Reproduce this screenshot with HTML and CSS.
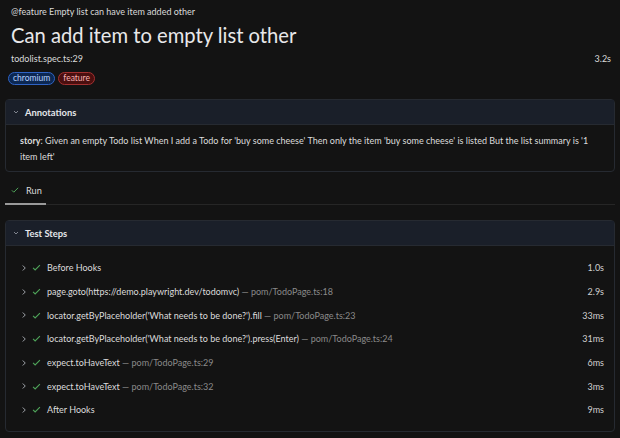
FILE: index.html
```html
<!DOCTYPE html>
<html>
<head>
<meta charset="utf-8">
<link rel="stylesheet" href="styles.css">
</head>
<body>
<div class="page">
  <div class="head">
    <div class="path">@feature Empty list can have item added other</div>
    <h1 class="title">Can add item to empty list other</h1>
    <div class="meta"><span>todolist.spec.ts:29</span><span>3.2s</span></div>
    <div class="badges"><span class="badge blue">chromium</span><span class="badge red">feature</span></div>
  </div>

  <section class="box annotations">
    <div class="box-head"><svg class="chev" viewBox="0 0 16 16"><path d="M4 6l4 4 4-4" /></svg>Annotations</div>
    <div class="ann-body"><b>story</b>: Given an empty Todo list When I add a Todo for 'buy some cheese' Then only the item 'buy some cheese' is listed But the list summary is '1 item left'</div>
  </section>

  <div class="tabs"><div class="tab"><svg class="check" viewBox="0 0 16 16"><path d="M3 8.5l3 3 7-7" /></svg>Run</div></div>

  <section class="box steps">
    <div class="box-head"><svg class="chev" viewBox="0 0 16 16"><path d="M4 6l4 4 4-4" /></svg>Test Steps</div>
    <div class="step-list">
      <div class="step"><svg class="rchev" viewBox="0 0 16 16"><path d="M6 4l4 4-4 4" /></svg><svg class="check" viewBox="0 0 16 16"><path d="M3 8.5l3 3 7-7" /></svg><span class="st">Before Hooks</span><span class="dur">1.0s</span></div>
      <div class="step"><svg class="rchev" viewBox="0 0 16 16"><path d="M6 4l4 4-4 4" /></svg><svg class="check" viewBox="0 0 16 16"><path d="M3 8.5l3 3 7-7" /></svg><span class="st">page.goto(https://demo.playwright.dev/todomvc) <span class="loc">— pom/TodoPage.ts:18</span></span><span class="dur">2.9s</span></div>
      <div class="step"><svg class="rchev" viewBox="0 0 16 16"><path d="M6 4l4 4-4 4" /></svg><svg class="check" viewBox="0 0 16 16"><path d="M3 8.5l3 3 7-7" /></svg><span class="st">locator.getByPlaceholder('What needs to be done?').fill <span class="loc">— pom/TodoPage.ts:23</span></span><span class="dur">33ms</span></div>
      <div class="step"><svg class="rchev" viewBox="0 0 16 16"><path d="M6 4l4 4-4 4" /></svg><svg class="check" viewBox="0 0 16 16"><path d="M3 8.5l3 3 7-7" /></svg><span class="st">locator.getByPlaceholder('What needs to be done?').press(Enter) <span class="loc">— pom/TodoPage.ts:24</span></span><span class="dur">31ms</span></div>
      <div class="step"><svg class="rchev" viewBox="0 0 16 16"><path d="M6 4l4 4-4 4" /></svg><svg class="check" viewBox="0 0 16 16"><path d="M3 8.5l3 3 7-7" /></svg><span class="st">expect.toHaveText <span class="loc">— pom/TodoPage.ts:29</span></span><span class="dur">6ms</span></div>
      <div class="step"><svg class="rchev" viewBox="0 0 16 16"><path d="M6 4l4 4-4 4" /></svg><svg class="check" viewBox="0 0 16 16"><path d="M3 8.5l3 3 7-7" /></svg><span class="st">expect.toHaveText <span class="loc">— pom/TodoPage.ts:32</span></span><span class="dur">3ms</span></div>
      <div class="step"><svg class="rchev" viewBox="0 0 16 16"><path d="M6 4l4 4-4 4" /></svg><svg class="check" viewBox="0 0 16 16"><path d="M3 8.5l3 3 7-7" /></svg><span class="st">After Hooks</span><span class="dur">9ms</span></div>
    </div>
  </section>
</div>
</body>
</html>
```
FILE: styles.css
```css
html, body {
  margin: 0;
  padding: 0;
  background: #131313;
  color: #e2e4e8;
  font-family: "Lato", "Open Sans", sans-serif;
}
.page {
  padding: 3px 5px 0 5px;
}
.head {
  padding: 0 4px 0 6px;
}
.path {
  font-size: 9px;
  line-height: 17px;
  color: #dadada;
}
.title {
  margin: 0;
  font-weight: 400;
  font-size: 20.2px;
  line-height: 30px;
  color: #e8e8ea;
}
.meta {
  display: flex;
  justify-content: space-between;
  font-size: 9px;
  line-height: 17px;
  color: #dadada;
}
.badges {
  display: flex;
  gap: 3px;
  margin: 5px 0 0 -3px;
}
.badge {
  font-size: 8.5px;
  line-height: 11px;
  padding: 0 4px;
  border-radius: 7px;
  border: 1px solid;
}
.badge.blue {
  background: #0c2853;
  border-color: #2f63c4;
  color: #b9d3ff;
}
.badge.red {
  background: #4b0f0f;
  border-color: #a33030;
  color: #f7b3b3;
}
.box {
  border: 1px solid #262a31;
  border-radius: 4px;
  background: #131313;
}
.annotations {
  margin-top: 14px;
}
.box-head {
  display: flex;
  align-items: center;
  height: 24px;
  background: #1a1f29;
  border-bottom: 1px solid #262a31;
  font-size: 9.4px;
  font-weight: 700;
  color: #e4e6ea;
  padding-left: 6px;
}
.chev {
  width: 8px;
  height: 8px;
  fill: none;
  stroke: #9aa0aa;
  stroke-width: 1.6;
  margin-right: 5px;
}
.ann-body {
  padding: 8px 14px 6px 14px;
  font-size: 9px;
  line-height: 16px;
  color: #dcdcdc;
}
.ann-body b {
  font-weight: 700;
}
.tabs {
  margin-top: 5px;
  border-bottom: 1px solid #262626;
  height: 27px;
  display: flex;
}
.tab {
  display: flex;
  align-items: center;
  padding: 0 6px 0 5px;
  font-size: 9.2px;
  color: #dcdcdc;
  border-bottom: 2px solid #9a9a9a;
  margin-bottom: -1px;
  width: 30px;
}
.check {
  width: 10px;
  height: 10px;
  fill: none;
  stroke: #4fa55a;
  stroke-width: 1.6;
  margin-right: 6px;
  flex: none;
}
.steps {
  margin-top: 15px;
}
.step-list {
  padding: 10px 0 9px 0;
}
.step {
  display: flex;
  align-items: center;
  height: 23.7px;
  font-size: 9px;
  color: #dcdcdc;
  padding-left: 13px;
  padding-right: 10px;
}
.step .check {
  width: 11px;
  height: 11px;
  margin-right: 5px;
}
.rchev {
  width: 10px;
  height: 10px;
  fill: none;
  stroke: #a0a4aa;
  stroke-width: 1.6;
  margin-right: 2px;
  flex: none;
}
.st {
  flex: 1;
  white-space: nowrap;
}
.loc {
  color: #8a8a8a;
}
.dur {
  color: #d0d0d0;
}
```
